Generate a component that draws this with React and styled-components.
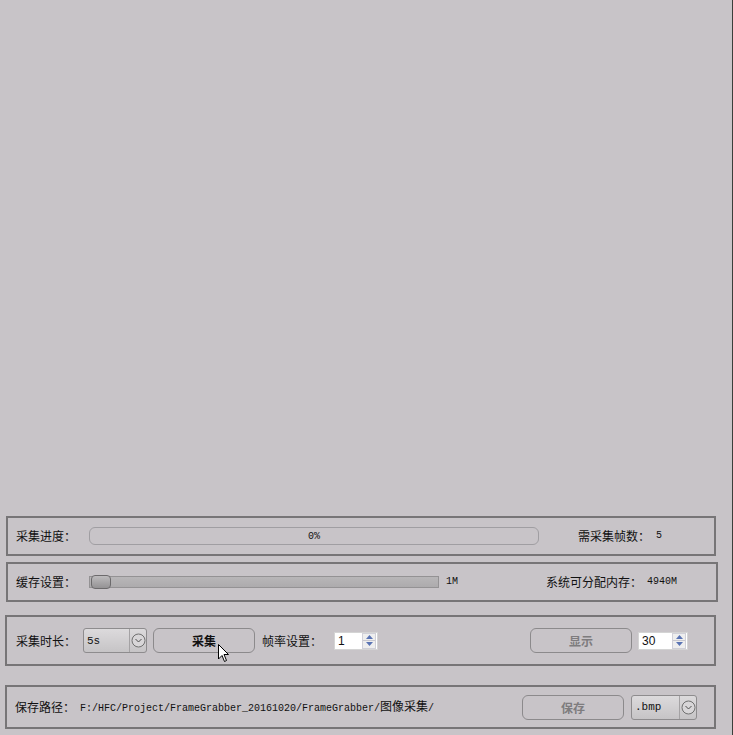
import React from 'react';
import styled, { createGlobalStyle } from 'styled-components';

const GlobalStyle = createGlobalStyle`
  html, body {
    margin: 0;
    padding: 0;
    background: #c8c4c8;
  }
  * {
    box-sizing: border-box;
  }
`;

const Window = styled.div`
  width: 733px;
  height: 735px;
  background: #c8c4c8;
  border-right: 1px solid #3b3f3b;
  display: flex;
  flex-direction: column;
  justify-content: flex-end;
  padding-bottom: 6px;
  font-family: "Noto Sans CJK SC", "Liberation Sans", sans-serif;
  font-size: 12px;
  color: #111;
  overflow: hidden;
`;

const Panel = styled.div`
  margin-left: ${p => p.$left}px;
  width: ${p => p.$width}px;
  height: ${p => p.$height}px;
  margin-top: ${p => p.$gap}px;
  border: 2px solid #777577;
  display: flex;
  align-items: center;
  padding-left: ${p => p.$pad}px;
  position: relative;
`;

const Label = styled.span`
  display: inline-block;
  width: ${p => (p.$width ? `${p.$width}px` : 'auto')};
  margin-left: ${p => p.$ml || 0}px;
  white-space: nowrap;
  line-height: 1;
  flex-shrink: 0;
`;

const Mono = styled.span`
  font-family: "Liberation Mono", monospace;
  font-size: 10px;
  margin-left: ${p => p.$ml || 0}px;
  white-space: nowrap;
  line-height: 1;
  flex-shrink: 0;
`;

const Cjk = styled.span`
  font-family: "Noto Sans CJK SC", sans-serif;
  font-size: 12px;
`;

const Progress = styled.div`
  width: 450px;
  height: 18px;
  border: 1px solid #a09ea2;
  border-radius: 6px;
  display: flex;
  align-items: center;
  justify-content: center;
  font-family: "Liberation Mono", monospace;
  font-size: 10px;
  flex-shrink: 0;
`;

const Groove = styled.div`
  width: 350px;
  height: 12px;
  border: 1px solid #949294;
  background: linear-gradient(#b8b6b8, #adabad);
  position: relative;
  flex-shrink: 0;
`;

const Handle = styled.div`
  position: absolute;
  left: 1px;
  top: -2px;
  width: 20px;
  height: 14px;
  border: 1px solid #6c6a6c;
  border-radius: 4px;
  background: linear-gradient(#bdbbbd, #949294);
`;

const Combo = styled.div`
  width: ${p => p.$width}px;
  height: 25px;
  margin-left: ${p => p.$ml || 0}px;
  border: 1px solid #8e8c8e;
  border-radius: 3px;
  background: linear-gradient(#dcdadc, #c6c4c6);
  display: flex;
  align-items: center;
  flex-shrink: 0;
`;

const ComboText = styled.span`
  flex: 1;
  padding-left: 3px;
  font-family: "Liberation Mono", monospace;
  font-size: 11px;
`;

const ComboArrow = styled.div`
  width: 17px;
  height: 100%;
  border-left: 1px solid #a4a2a4;
  display: flex;
  align-items: center;
  justify-content: center;
`;

const Button = styled.div`
  width: 102px;
  height: 25px;
  margin-left: ${p => p.$ml || 0}px;
  border: 1px solid #8c8a8c;
  border-radius: 6px;
  display: flex;
  align-items: center;
  justify-content: center;
  font-weight: 700;
  font-size: 12px;
  color: ${p => (p.$disabled ? '#7e7c7e' : '#111')};
  position: relative;
  flex-shrink: 0;
`;

const Spin = styled.div`
  width: ${p => p.$width}px;
  height: 18px;
  margin-left: ${p => p.$ml || 0}px;
  background: #fff;
  border: 1px solid #d4d4d4;
  display: flex;
  align-items: center;
  flex-shrink: 0;
`;

const SpinText = styled.span`
  flex: 1;
  padding-left: 3px;
  font-family: "Liberation Sans", sans-serif;
  font-size: 12px;
`;

const SpinButtons = styled.div`
  width: 14px;
  height: 16px;
  margin-right: 1px;
  display: flex;
  flex-direction: column;
  border: 1px solid #d0d0d8;
  background: #eeeeee;
`;

const SpinHalf = styled.div`
  flex: 1;
  display: flex;
  align-items: center;
  justify-content: center;
  border-top: ${p => (p.$down ? '1px solid #c8c8d0' : 'none')};
`;

const Pointer = styled.svg`
  position: absolute;
  left: 64px;
  top: 15px;
`;

const Spacer = styled.div`
  flex: ${p => (p.$fixed ? `0 0 ${p.$fixed}px` : '1')};
`;

const ArrowIcon = () => (
  <svg width="15" height="15" viewBox="0 0 15 15">
    <circle cx="7.5" cy="7.5" r="6.5" fill="#d8d6d8" stroke="#707070" strokeWidth="1" />
    <path d="M4.5 6 L7.5 9 L10.5 6" fill="none" stroke="#505050" strokeWidth="1" />
  </svg>
);

const Tri = ({ down }) => (
  <svg width="7" height="4" viewBox="0 0 7 4">
    <path d={down ? 'M0 0 L7 0 L3.5 4 Z' : 'M0 4 L7 4 L3.5 0 Z'} fill="#5a74b4" />
  </svg>
);

const SpinBox = ({ value, width, ml }) => (
  <Spin $width={width} $ml={ml}>
    <SpinText>{value}</SpinText>
    <SpinButtons>
      <SpinHalf><Tri /></SpinHalf>
      <SpinHalf $down><Tri down /></SpinHalf>
    </SpinButtons>
  </Spin>
);

const ComboBox = ({ value, width, ml }) => (
  <Combo $width={width} $ml={ml}>
    <ComboText>{value}</ComboText>
    <ComboArrow><ArrowIcon /></ComboArrow>
  </Combo>
);

const App = () => (
  <>
    <GlobalStyle />
    <Window>
      <Panel $left={6} $width={710} $height={40} $gap={0} $pad={8}>
        <Label $width={73}>采集进度：</Label>
        <Progress>0%</Progress>
        <Label $ml={39}>需采集帧数：</Label>
        <Mono $ml={6}>5</Mono>
      </Panel>

      <Panel $left={6} $width={712} $height={40} $gap={6} $pad={8}>
        <Label $width={73}>缓存设置：</Label>
        <Groove><Handle /></Groove>
        <Mono $ml={7}>1M</Mono>
        <Label $ml={88}>系统可分配内存：</Label>
        <Mono $ml={5}>4940M</Mono>
      </Panel>

      <Panel $left={5} $width={711} $height={51} $gap={13} $pad={9}>
        <Label $width={67}>采集时长：</Label>
        <ComboBox value="5s" width={64} />
        <Button $ml={6}>
          采集
          <Pointer width="12" height="19" viewBox="0 0 12 19">
            <path d="M0.5 0.5 L0.5 15 L4 11.5 L6.5 17.5 L8.5 16.5 L6 10.5 L10.5 10.5 Z" fill="#fff" stroke="#000" strokeWidth="1" />
          </Pointer>
        </Button>
        <Label $ml={7} $width={72}>帧率设置：</Label>
        <SpinBox value="1" width={44} />
        <Spacer />
        <Button $disabled>显示</Button>
        <SpinBox value="30" width={50} ml={6} />
        <Spacer $fixed={26} />
      </Panel>

      <Panel $left={5} $width={711} $height={44} $gap={19} $pad={8}>
        <Label $width={65}>保存路径：</Label>
        <Mono>
          F:/HFC/Project/FrameGrabber_20161020/FrameGrabber/<Cjk>图像采集</Cjk>/
        </Mono>
        <Spacer />
        <Button $disabled>保存</Button>
        <ComboBox value=".bmp" width={66} ml={7} />
        <Spacer $fixed={17} />
      </Panel>
    </Window>
  </>
);

export default App;
